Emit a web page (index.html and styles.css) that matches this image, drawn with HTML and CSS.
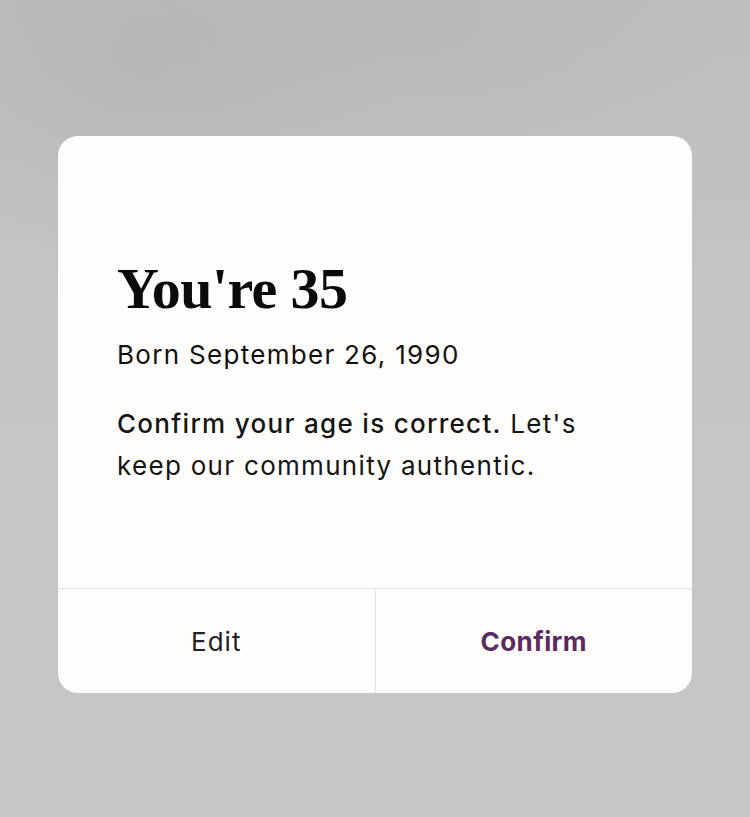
FILE: index.html
```html
<!DOCTYPE html>
<html lang="en">
<head>
<meta charset="utf-8">
<title>Confirm age</title>
<link rel="stylesheet" href="styles.css">
</head>
<body>
<div class="backdrop">
  <div class="dialog">
    <div class="dialog-body">
      <h1 class="title">You're 35</h1>
      <p class="born">Born September 26, 1990</p>
      <p class="message"><span class="strong">Confirm your age is correct.</span> Let's keep our community authentic.</p>
    </div>
    <div class="actions">
      <button class="action action-edit">Edit</button>
      <button class="action action-confirm">Confirm</button>
    </div>
  </div>
</div>
</body>
</html>
```
FILE: styles.css
```css
html, body {
  margin: 0;
  padding: 0;
  height: 100%;
}
body {
  background: #c3c2c2;
  font-family: "Inter", "Liberation Sans", sans-serif;
}
.backdrop {
  height: 817px;
  display: flex;
  align-items: flex-start;
  justify-content: center;
  padding-top: 136px;
  box-sizing: border-box;
  background:
    radial-gradient(ellipse 260px 200px at 140px 60px, rgba(170,169,169,0.35), transparent),
    radial-gradient(ellipse 300px 160px at 420px 40px, rgba(175,174,174,0.3), transparent),
    linear-gradient(#bebdbd, #c6c5c5 40%, #c6c6c6);
}
.dialog {
  width: 634px;
  height: 557px;
  background: #fefdfc;
  border-radius: 20px;
  display: flex;
  flex-direction: column;
  overflow: hidden;
}
.dialog-body {
  flex: 1;
  padding: 124px 59px 0;
  color: #111;
}
.title {
  margin: 0;
  font-family: "Liberation Serif", "DejaVu Serif", serif;
  font-weight: 700;
  font-size: 58px;
  line-height: 58px;
  letter-spacing: -0.6px;
  color: #0b0b0b;
}
.born {
  margin: 20px 0 0;
  font-size: 26px;
  line-height: 34px;
  letter-spacing: 1.3px;
  color: #111;
}
.message {
  margin: 31px 0 0;
  font-size: 26px;
  line-height: 42px;
  letter-spacing: 1.3px;
  color: #151515;
  max-width: 470px;
}
.strong {
  font-weight: 500;
}
.actions {
  height: 104px;
  border-top: 1px solid #e2e1e0;
  display: flex;
}
.action {
  flex: 1;
  border: 0;
  background: transparent;
  font-family: "Inter", "Liberation Sans", sans-serif;
  font-size: 26px;
  padding: 0;
  cursor: pointer;
}
.action-edit {
  color: #222;
  letter-spacing: 1px;
  border-right: 1px solid #e2e1e0;
}
.action-confirm {
  color: #5b2a5f;
  font-weight: 700;
  letter-spacing: 0.4px;
}
```
